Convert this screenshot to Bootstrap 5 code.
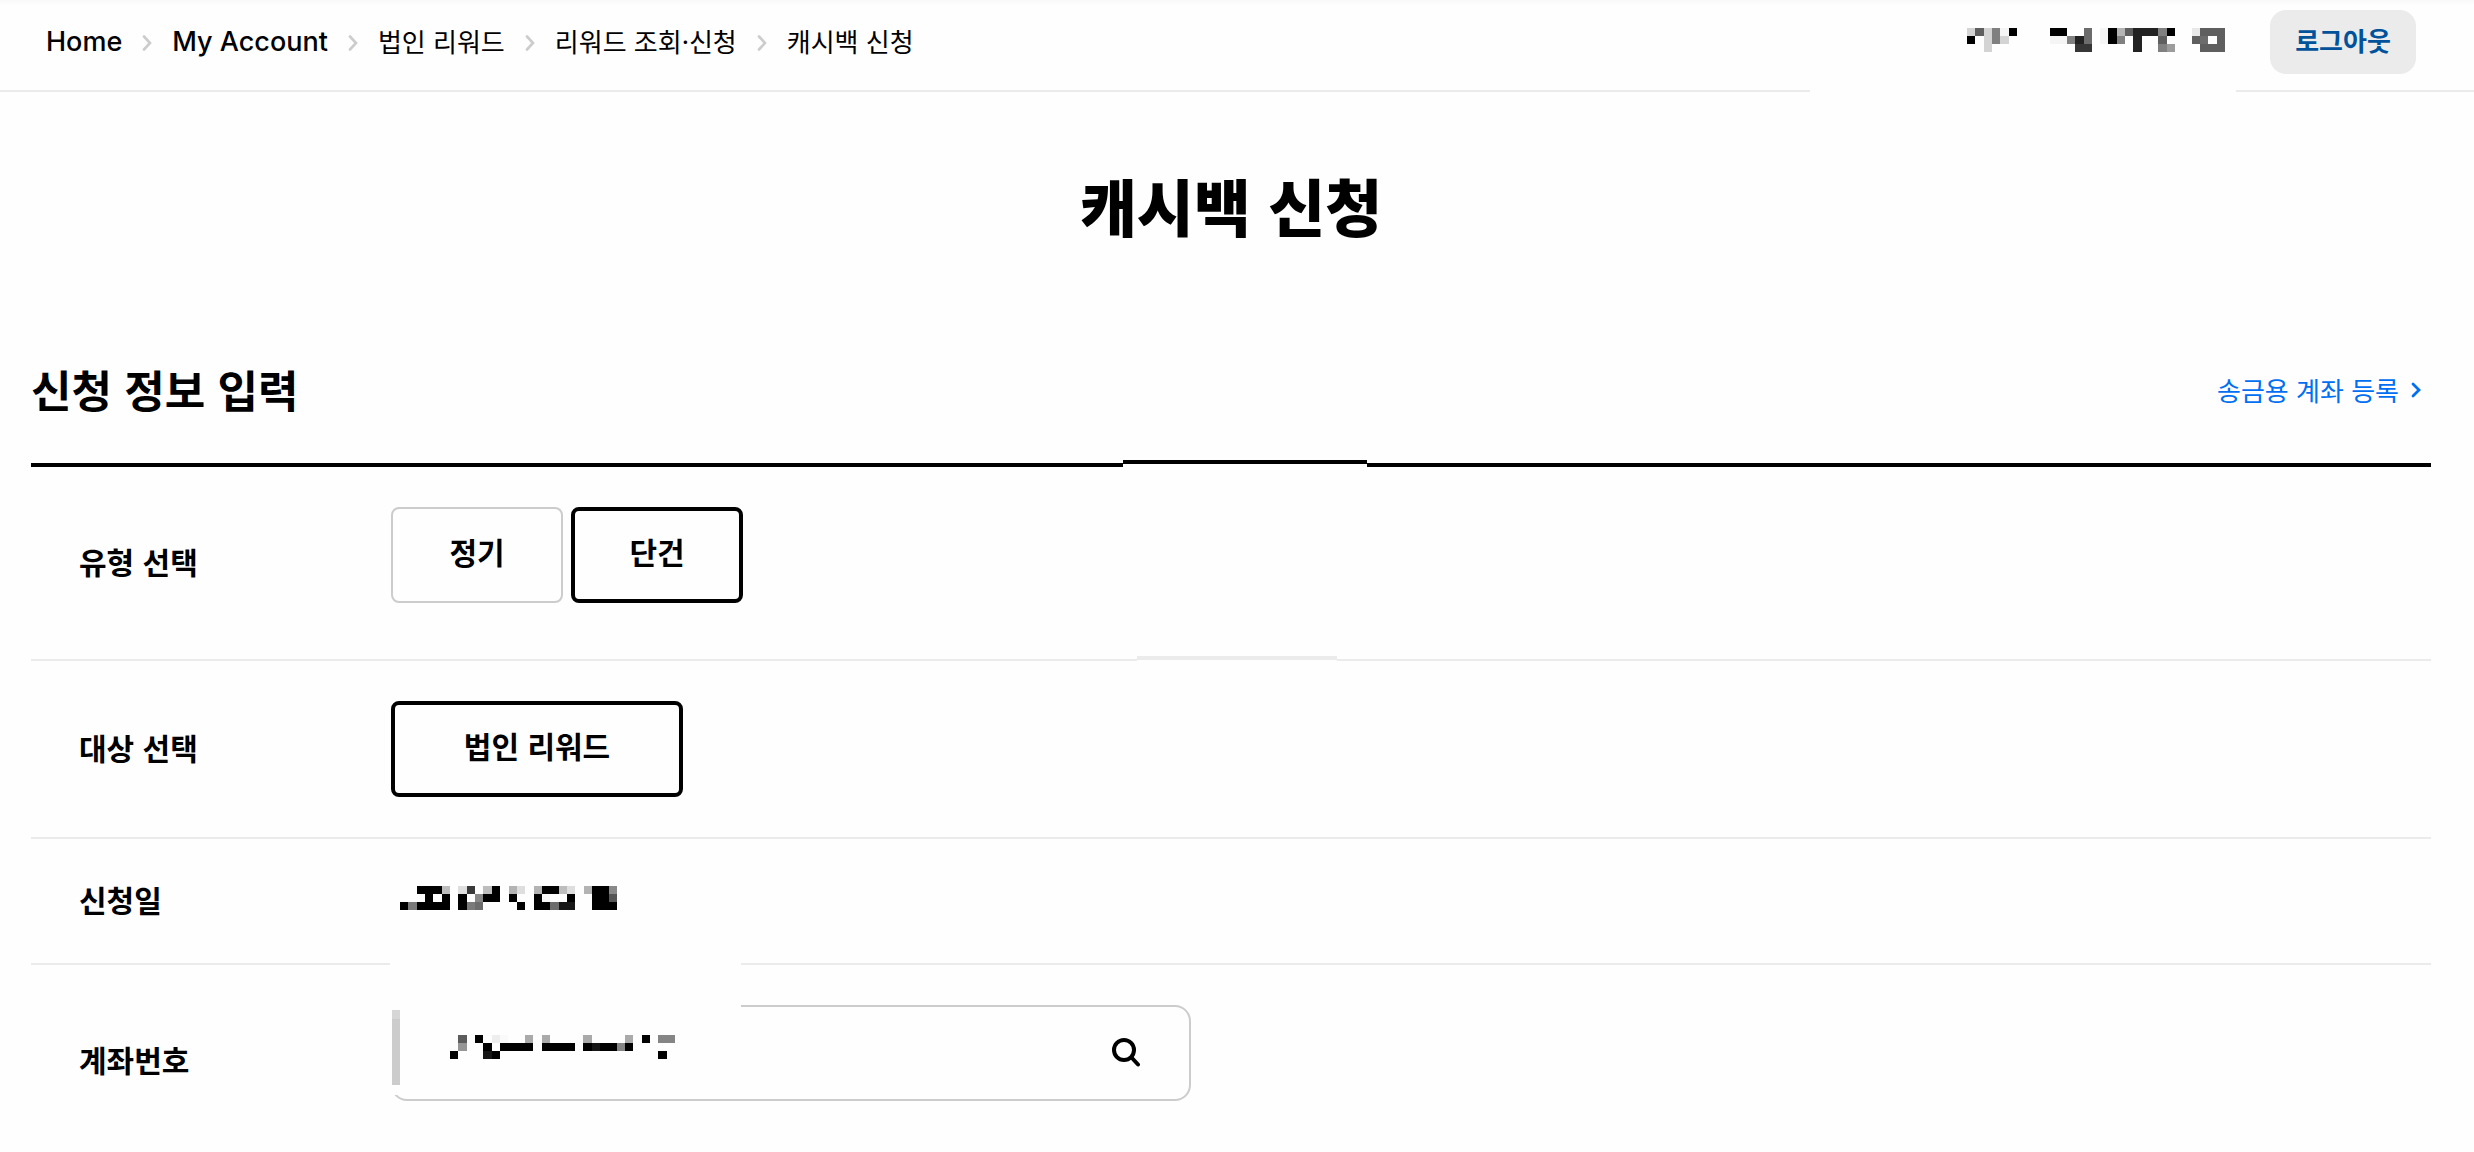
<!DOCTYPE html>
<html lang="ko">
<head>
<meta charset="utf-8">
<meta name="viewport" content="width=device-width, initial-scale=1">
<title>캐시백 신청</title>
<link href="https://cdn.jsdelivr.net/npm/bootstrap@5.3.0/dist/css/bootstrap.min.css" rel="stylesheet">
<style>
  body { background: #fefefe; color: #000; font-family: Inter, "Noto Sans CJK KR", sans-serif; }
  .ko { font-family: "Noto Sans CJK KR", sans-serif; }
  .topbar { padding: 10px 58px 16px 46px; border-bottom: 2px solid #ebebeb; background: linear-gradient(#f8f8f8, #fefefe 5px); }
  .crumbs { gap: 20px; font-size: 26px; line-height: 40px; }
  .crumbs a, .crumbs span { color: #000; text-decoration: none; }
  .crumbs .latin { font-size: 27px; font-weight: 500; }
  .crumbs .ko { padding-bottom: 2px; }
  .crumbs li { display: flex; align-items: center; gap: 20px; }
  .crumbs svg { margin-top: 2px; }
  .user-info { gap: 45px; }
  .mask { position: relative; z-index: 1; padding-bottom: 4px; }
  .mask::before { content: ""; position: absolute; z-index: -1; background: #fefefe; }
  .mask-user::before { left: -157px; right: -11px; top: 34px; height: 40px; }
  .pixels { display: block; height: 24px; shape-rendering: crispEdges; }
  .logout { height: 64px; padding: 0 24px 4px; border: 0; border-radius: 16px; background: #ebebeb; color: #00529b; font-size: 26px; font-weight: 700; line-height: 40px; min-width: 146px; }
  .sheet { padding: 0 43px 0 31px; }
  .page-title { margin: 61px 0 0; font-size: 62px; line-height: 104px; font-weight: 900; }
  .section-head { padding: 93px 10px 34px 0; }
  .section-title { margin: 0; font-size: 44px; line-height: 79px; font-weight: 700; }
  .register { gap: 12px; font-size: 26px; line-height: 40px; color: #006ff2; text-decoration: none; }
  .panel { border-top: 4px solid #000; position: relative; }
  .panel::before { content: ""; position: absolute; top: -7px; left: 1092px; width: 244px; height: 7px; border-top: 4px solid #000; background: #fefefe; }
  .line { padding: 40px 48px; border-bottom: 2px solid #ebebeb; position: relative; }
  .line-first::after { content: ""; position: absolute; left: 1106px; bottom: -2px; width: 200px; height: 5px; border-top: 4px solid #ebebeb; background: #fefefe; }
  .line-date { padding: 40px 48px; min-height: 126px; }
  .line-last { padding-bottom: 20px; border-bottom: 0; }
  .caption { width: 312px; padding-bottom: 4px; font-size: 30px; line-height: 40px; font-weight: 700; }
  .tall { height: 112px; }
  .choices { gap: 8px; }
  .choice { height: 96px; min-width: 172px; padding: 0 0 8px; border: 2px solid #ccc; border-radius: 8px; background: #fefefe; color: #000; font-size: 30px; font-weight: 700; }
  .choice.picked { border: 4px solid #000; }
  .choice.wide { min-width: 292px; }
  .mask-date { margin: 0 9px 6px; }
  .account { width: 800px; height: 96px; position: relative; }
  .account input { height: 96px; border: 2px solid #ccc; border-radius: 16px; background: #fefefe; padding: 0 110px 0 56px; font-size: 30px; }
  .find { position: absolute; right: 37px; top: 19px; width: 56px; height: 56px; padding: 0; border: 0; background: none; }
  .cover { position: absolute; left: -1px; top: -42px; width: 351px; height: 132px; background: #fefefe; z-index: 1; }
  .cover svg { position: absolute; left: 60px; top: 72px; }
  .cover::after { content: ""; position: absolute; left: 2px; top: 47px; width: 8px; height: 75px; background: linear-gradient(#d6d6d6 9px, #ccc 9px); }
</style>
<script src="https://cdn.jsdelivr.net/npm/bootstrap@5.3.0/dist/js/bootstrap.bundle.min.js"></script>
</head>
<body>
<header class="topbar d-flex justify-content-between align-items-center">
  <nav aria-label="breadcrumb">
    <ol class="crumbs list-unstyled d-flex align-items-center mb-0">
      <li><a href="#" class="latin">Home</a></li>
      <li><svg width="10" height="16" viewBox="0 0 10 16" fill="none" stroke="#ccc" stroke-width="2.6" stroke-linecap="round"><path d="M2 1.5 8 8 2 14.5"/></svg><a href="#" class="latin">My Account</a></li>
      <li><svg width="10" height="16" viewBox="0 0 10 16" fill="none" stroke="#ccc" stroke-width="2.6" stroke-linecap="round"><path d="M2 1.5 8 8 2 14.5"/></svg><a href="#" class="ko">법인 리워드</a></li>
      <li><svg width="10" height="16" viewBox="0 0 10 16" fill="none" stroke="#ccc" stroke-width="2.6" stroke-linecap="round"><path d="M2 1.5 8 8 2 14.5"/></svg><a href="#" class="ko">리워드 조회·신청</a></li>
      <li><svg width="10" height="16" viewBox="0 0 10 16" fill="none" stroke="#ccc" stroke-width="2.6" stroke-linecap="round"><path d="M2 1.5 8 8 2 14.5"/></svg><span class="ko" aria-current="page">캐시백 신청</span></li>
    </ol>
  </nav>
  <div class="user-info d-flex align-items-center">
    <div class="mask mask-user">
      <svg class="pixels" width="258" viewBox="0 0 31 3" preserveAspectRatio="none">
        <path fill="#000" d="M5 0h1v1h-1zM10 0h2v1h-2zM17 0h1v2h-1zM24 0h1v1h-1zM0 1h1v1h-1z"/>
        <path fill="#222" d="M20 0h1v3h-1zM21 0h2v1h-2zM13 1h1v1h-1z"/>
        <path fill="#363636" d="M13 2h2v1h-2z"/>
        <path fill="#5f5f5f" d="M1 0h1v1h-1zM19 0h1v1h-1zM28 0h3v1h-3zM27 1h1v1h-1zM30 1h1v1h-1zM28 2h3v1h-3zM23 1h1v1h-1z"/>
        <path fill="#6c6c6c" d="M14 0h1v2h-1zM28 1h1v1h-1z"/>
        <path fill="#808080" d="M3 0h1v2h-1zM23 0h1v1h-1zM12 1h1v1h-1zM18 1h1v1h-1zM23 2h1v1h-1z"/>
        <path fill="#9c9c9c" d="M24 2h1v1h-1z"/>
        <path fill="#b4b4b4" d="M18 0h1v1h-1z"/>
        <path fill="#d4d4d4" d="M0 0h1v1h-1zM2 0h1v3h-1zM4 1h1v1h-1z"/>
        <path fill="#e8e8e8" d="M27 0h1v1h-1z"/>
        <path fill="#f5f5f5" d="M4 0h1v1h-1zM16 0h1v2h-1zM10 1h2v1h-2z"/>
      </svg>
    </div>
    <button type="button" class="logout ko">로그아웃</button>
  </div>
</header>

<main class="sheet ko">
  <h1 class="page-title text-center">캐시백 신청</h1>
  <div class="section-head d-flex justify-content-between align-items-center">
    <h2 class="section-title">신청 정보 입력</h2>
    <a href="#" class="register d-flex align-items-center">송금용 계좌 등록
      <svg width="10" height="16" viewBox="0 0 10 16" fill="none" stroke="currentColor" stroke-width="2.8" stroke-linecap="round"><path d="M2 2 8 8 2 14"/></svg>
    </a>
  </div>

  <form class="panel">
    <div class="line line-first">
      <div class="tall d-flex align-items-center">
        <div class="caption" id="type-caption">유형 선택</div>
        <div class="choices d-flex align-self-start" role="group" aria-labelledby="type-caption">
          <button type="button" class="choice" aria-pressed="false">정기</button>
          <button type="button" class="choice picked" aria-pressed="true">단건</button>
        </div>
      </div>
    </div>
    <div class="line d-flex align-items-center">
      <div class="caption" id="target-caption">대상 선택</div>
      <div class="choices d-flex" role="group" aria-labelledby="target-caption">
        <button type="button" class="choice picked wide" aria-pressed="true">법인 리워드</button>
      </div>
    </div>
    <div class="line line-date d-flex align-items-center">
      <div class="caption">신청일</div>
      <div class="mask-date">
        <svg class="pixels" width="217" viewBox="0 0 26 3" preserveAspectRatio="none">
          <path fill="#000" d="M2 0h3v1h-3zM11 0h1v1h-1zM17 0h2v1h-2zM23 0h2v3h-2zM3 1h1v1h-1zM5 1h1v1h-1zM7 1h1v2h-1zM10 1h2v1h-2zM13 1h1v1h-1zM16 1h1v1h-1zM20 1h1v1h-1zM0 2h1v1h-1zM2 2h4v1h-4zM14 2h1v1h-1zM16 2h2v1h-2zM25 2h1v1h-1z"/>
          <path fill="#171717" d="M19 2h2v1h-2z"/>
          <path fill="#3a3a3a" d="M8 0h1v1h-1z"/>
          <path fill="#555" d="M25 1h1v1h-1z"/>
          <path fill="#6c6c6c" d="M9 2h1v1h-1zM18 2h1v1h-1z"/>
          <path fill="#7a7a7a" d="M1 2h1v1h-1zM8 2h1v1h-1z"/>
          <path fill="#888" d="M25 0h1v1h-1zM9 1h1v1h-1z"/>
          <path fill="#b3b3b3" d="M13 0h1v1h-1zM16 0h1v1h-1zM22 0h1v1h-1z"/>
          <path fill="#bdbdbd" d="M5 0h1v1h-1zM10 0h1v1h-1zM19 0h1v1h-1z"/>
          <path fill="#dedede" d="M7 0h1v1h-1zM14 0h1v1h-1zM20 0h1v1h-1z"/>
          <path fill="#f7f7f7" d="M17 1h1v1h-1z"/>
        </svg>
      </div>
    </div>
    <div class="line line-last">
      <div class="tall d-flex align-items-center">
        <label class="caption" for="account-no">계좌번호</label>
        <div class="account align-self-start">
          <input type="text" id="account-no" class="form-control">
          <div class="cover">
            <svg class="pixels" width="225" viewBox="0 0 27 3" preserveAspectRatio="none">
              <path fill="#000" d="M3 0h1v1h-1zM23 0h1v1h-1zM4 1h1v1h-1zM6 1h4v1h-4zM11 1h4v1h-4zM16 1h1v1h-1zM18 1h2v1h-2zM21 1h1v1h-1zM0 2h1v1h-1zM5 2h1v1h-1zM25 2h1v1h-1z"/>
              <path fill="#161616" d="M17 1h1v1h-1zM4 2h1v1h-1z"/>
              <path fill="#5c5c5c" d="M1 0h1v1h-1z"/>
              <path fill="#858585" d="M20 1h1v1h-1zM25 0h2v1h-2z"/>
              <path fill="#969696" d="M1 1h1v1h-1z"/>
              <path fill="#aaa" d="M9 0h1v1h-1zM11 0h1v1h-1zM16 0h1v1h-1zM21 0h1v1h-1z"/>
              <path fill="#eee" d="M5 0h1v1h-1z"/>
              <path fill="#fafafa" d="M6 0h1v1h-1z"/>
            </svg>
          </div>
          <button type="button" class="find" aria-label="계좌 검색">
            <svg width="30" height="30" viewBox="0 0 30 30" fill="none" stroke="#000" stroke-linecap="round"><circle cx="13" cy="13" r="10" stroke-width="4"/><path d="M20.500 20.500 27 27.500" stroke-width="4"/></svg>
          </button>
        </div>
      </div>
    </div>
  </form>
</main>
</body>
</html>
